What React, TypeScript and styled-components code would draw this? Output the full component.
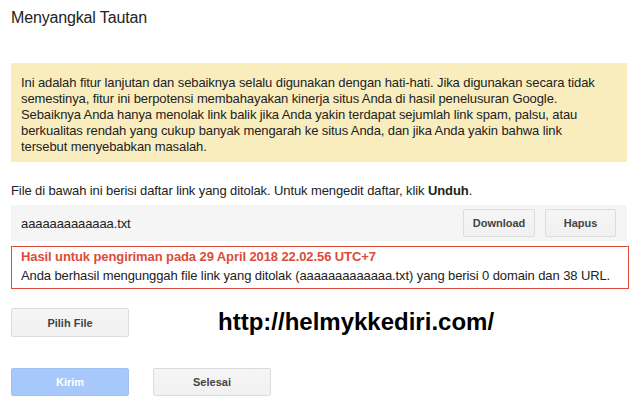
import React from "react";
import styled, { createGlobalStyle } from "styled-components";

const Global = createGlobalStyle`
  html, body { margin: 0; padding: 0; background: #fff; }
  body { font-family: "Liberation Sans", Arial, sans-serif; color: #222; }
`;

const Page = styled.div`
  width: 616px;
  padding: 9px 0 0 11px;
  display: flex;
  flex-direction: column;
`;

const Title = styled.h1`
  margin: 0;
  font-size: 16px;
  line-height: 18px;
  font-weight: normal;
  color: #222;
  letter-spacing: -0.15px;
`;

const Warning = styled.div`
  margin-top: 36px;
  background: #f9edbe;
  padding: 12px 10px 7px;
  font-size: 13px;
  line-height: 16px;
  color: #222;
  letter-spacing: -0.1px;
  white-space: nowrap;
`;

const Intro = styled.p`
  margin: 21px 0 0;
  font-size: 13px;
  line-height: 16px;
  color: #222;
  letter-spacing: -0.1px;
  b { font-weight: bold; }
`;

const FileRow = styled.div`
  margin-top: 6px;
  height: 36px;
  background: #f5f5f5;
  display: flex;
  align-items: center;
  padding: 0 11px 0 10px;
  gap: 10px;
`;

const FileName = styled.span`
  flex: 1;
  font-size: 13px;
  color: #222;
  letter-spacing: -0.1px;
`;

const Button = styled.button<{ $w?: number; $h?: number; $primary?: boolean }>`
  box-sizing: border-box;
  min-width: ${(p) => p.$w ?? 72}px;
  height: ${(p) => p.$h ?? 28}px;
  padding: 0 8px;
  border-radius: 2px;
  font-family: "Liberation Sans", Arial, sans-serif;
  font-size: 11px;
  font-weight: bold;
  color: ${(p) => (p.$primary ? "#fff" : "#444")};
  border: 1px solid ${(p) => (p.$primary ? "#a0c0f0" : "#dcdcdc")};
  background: ${(p) =>
    p.$primary ? "#a6c8fb" : "linear-gradient(#f5f5f5, #f1f1f1)"};
  cursor: default;
`;

const Result = styled.div`
  margin-top: 5px;
  width: 618px;
  box-sizing: border-box;
  border: 1px solid #dd4b39;
  padding: 2px 9px 4px;
  font-size: 13px;
  line-height: 16px;
  white-space: nowrap;
  letter-spacing: -0.1px;
`;

const ResultTitle = styled.div`
  color: #dd4b39;
  font-weight: bold;
`;

const ResultText = styled.div`
  color: #222;
  margin-top: 3px;
`;

const UploadRow = styled.div`
  margin-top: 19px;
  display: flex;
  align-items: center;
`;

const Site = styled.span`
  margin-left: 89px;
  font-size: 24px;
  font-weight: bold;
  color: #000;
  position: relative;
  top: -1px;
`;

const Actions = styled.div`
  margin-top: 31px;
  display: flex;
  gap: 24px;
`;

export default function App() {
  return (
    <Page>
      <Global />
      <Title>Menyangkal Tautan</Title>
      <Warning>
        Ini adalah fitur lanjutan dan sebaiknya selalu digunakan dengan hati-hati. Jika digunakan secara tidak
        <br />
        semestinya, fitur ini berpotensi membahayakan kinerja situs Anda di hasil penelusuran Google.
        <br />
        Sebaiknya Anda hanya menolak link balik jika Anda yakin terdapat sejumlah link spam, palsu, atau
        <br />
        berkualitas rendah yang cukup banyak mengarah ke situs Anda, dan jika Anda yakin bahwa link
        <br />
        tersebut menyebabkan masalah.
      </Warning>
      <Intro>
        File di bawah ini berisi daftar link yang ditolak. Untuk mengedit daftar, klik <b>Unduh</b>.
      </Intro>
      <FileRow>
        <FileName>aaaaaaaaaaaaa.txt</FileName>
        <Button>Download</Button>
        <Button $w={71}>Hapus</Button>
      </FileRow>
      <Result>
        <ResultTitle>Hasil untuk pengiriman pada 29 April 2018 22.02.56 UTC+7</ResultTitle>
        <ResultText>
          Anda berhasil mengunggah file link yang ditolak (aaaaaaaaaaaaa.txt) yang berisi 0 domain dan 38 URL.
        </ResultText>
      </Result>
      <UploadRow>
        <Button $w={118} $h={29}>Pilih File</Button>
        <Site>http://helmykkediri.com/</Site>
      </UploadRow>
      <Actions>
        <Button $w={118} $primary>Kirim</Button>
        <Button $w={118}>Selesai</Button>
      </Actions>
    </Page>
  );
}
